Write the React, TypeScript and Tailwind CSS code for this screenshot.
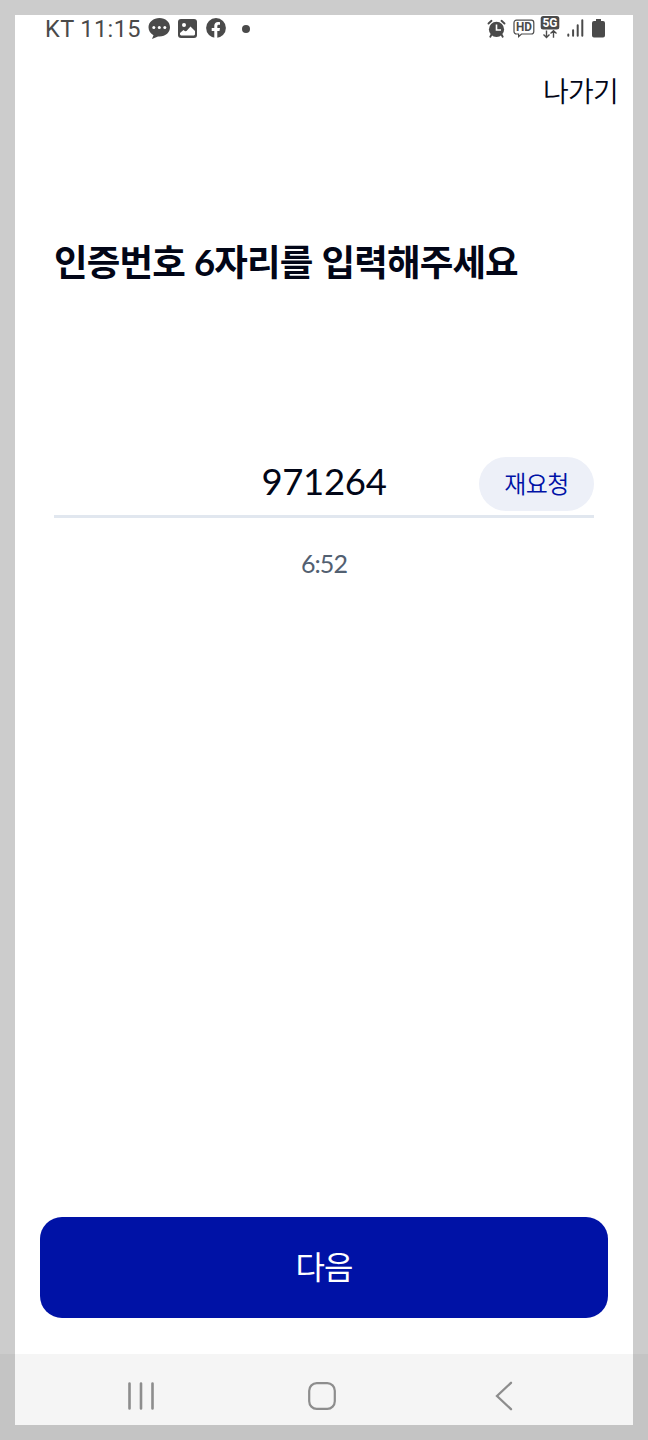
import React from "react";

const textFont = "font-['Lato','Noto_Sans_CJK_KR',sans-serif]";

function StatusIcons() {
  return (
    <div className="flex items-start text-[#4a4a4a]">
      {/* alarm */}
      <svg className="mt-[4px] h-[20px] w-[20px]" viewBox="0 0 20 20">
        <circle cx="9.5" cy="10.4" r="7.6" fill="currentColor" />
        <path
          d="M1.5 4.5L4.5 1.8M17.5 4.5L14.5 1.8M4.5 15.5L3.3 17.7M14.5 15.5l1.2 2.2"
          stroke="currentColor"
          strokeWidth="1.9"
          strokeLinecap="round"
        />
        <path d="M9.5 5.5V11H14" fill="none" stroke="#fff" strokeWidth="1.6" />
      </svg>
      {/* HD call */}
      <svg className="ml-[6px] mt-[4px] h-[19px] w-[22px]" viewBox="0 0 22 19">
        <path
          d="M3.5 1.2h14.8a2.5 2.5 0 0 1 2.5 2.5v8.8a2.5 2.5 0 0 1-2.5 2.5H8.5L5.6 17.6V15H3.5A2.5 2.5 0 0 1 1 12.5V3.7a2.5 2.5 0 0 1 2.5-2.5z"
          fill="none"
          stroke="currentColor"
          strokeWidth="1.2"
        />
        <text
          x="11"
          y="12.3"
          textAnchor="middle"
          textLength="16"
          lengthAdjust="spacingAndGlyphs"
          className="font-['Roboto',sans-serif] text-[12px] font-bold"
          fill="currentColor"
        >
          HD
        </text>
      </svg>
      {/* 5G */}
      <svg className="ml-[5px] h-[24px] w-[20px]" viewBox="0 0 20 24">
        <rect x="0.7" y="1" width="18.6" height="13.5" rx="2.5" fill="currentColor" />
        <text
          x="10"
          y="12.3"
          textAnchor="middle"
          textLength="15"
          lengthAdjust="spacingAndGlyphs"
          className="font-['Roboto',sans-serif] text-[13px] font-bold"
          fill="#fff"
        >
          5G
        </text>
        <path
          d="M6.500 15.500v7M3.500 19.600l3 2.900 3-2.900M13.500 22.800v-7M10.500 18.500l3-2.900 3 2.900"
          fill="none"
          stroke="currentColor"
          strokeWidth="1.4"
        />
      </svg>
      {/* signal */}
      <svg className="ml-[7px] mt-[4px] h-[18px] w-[17px]" viewBox="0 0 17 18">
        <path
          d="M1.3 15.5v1.3M6.1 11.2v5.6M10.7 6.2v10.6M15.3 1.2v15.6"
          stroke="currentColor"
          strokeWidth="2"
          strokeLinecap="round"
        />
      </svg>
      {/* battery */}
      <svg className="ml-[7px] mt-[4px] h-[19px] w-[15px]" viewBox="0 0 15 19">
        <path
          d="M5 0h5v2h2a2 2 0 0 1 2 2v12.5a2 2 0 0 1-2 2H3a2 2 0 0 1-2-2V4a2 2 0 0 1 2-2h2z"
          fill="currentColor"
        />
      </svg>
    </div>
  );
}

function StatusBar() {
  return (
    <div className="flex h-[30px] items-start justify-between pl-[30px] pr-[27px]">
      <div className="flex items-start text-[#4a4a4a]">
        <p className="w-[103px] whitespace-nowrap font-['Roboto',sans-serif] text-[23.5px] leading-[28px] tracking-[0.4px]">
          KT 11:15
        </p>
        <svg className="mt-[3px] h-[22px] w-[23px]" viewBox="0 0 23 22">
          <path
            d="M11.5 0C5.5 0 .5 4 .5 9.3c0 3.500 2 6.300 5 7.900L4 21l6-2.600c7.500.6 12-4 12-9.100C22 4 17.500 0 11.500 0z"
            fill="currentColor"
          />
          <circle cx="5.8" cy="9.5" r="1.5" fill="#fff" />
          <circle cx="11.3" cy="9.5" r="1.5" fill="#fff" />
          <circle cx="16.8" cy="9.5" r="1.5" fill="#fff" />
        </svg>
        <svg className="ml-[7px] mt-[4px] h-[19px] w-[19px]" viewBox="0 0 19 19">
          <rect width="19" height="19" rx="3" fill="currentColor" />
          <circle cx="6" cy="6" r="2" fill="#fff" />
          <path
            d="M2 15.5V14l3.5-3 1.6 1.2 1.4-.3 4-4.4L17 12v3.500l-1 1H3z"
            fill="#fff"
          />
        </svg>
        <svg className="ml-[9px] mt-[3px] h-[20px] w-[20px]" viewBox="0 0 20 20">
          <circle cx="10" cy="10" r="9.9" fill="currentColor" />
          <path
            d="M8.3 20v-7H5.7v-3h2.6V7.8C8.3 5.3 9.8 4 12 4c1 0 2 .2 2 .2v2.5h-1.2c-1.2 0-1.5.7-1.5 1.5V10H14l-.5 3h-2.2v7z"
            fill="#fff"
          />
        </svg>
        <div className="ml-[16px] mt-[10px] h-[8px] w-[8px] rounded-full bg-[#4a4a4a]" />
      </div>
      <StatusIcons />
    </div>
  );
}

function NavigationBar() {
  return (
    <div className="h-[86px] bg-[#c4c4c4] px-[15px] pb-[15px]">
      <div className="flex h-[71px] items-center bg-[#f5f5f5] pl-[111px] pt-[13px] text-[#8d8d8d]">
        <button>
          <svg className="h-[30px] w-[30px]" viewBox="0 0 30 30">
            <path
              d="M3.5 2.5v25M15 2.5v25M26.5 2.5v25"
              stroke="currentColor"
              strokeWidth="2.6"
              strokeLinecap="round"
            />
          </svg>
        </button>
        <button className="ml-[151px]">
          <svg className="h-[30px] w-[30px]" viewBox="0 0 30 30">
            <rect
              x="2.2"
              y="2.2"
              width="25.6"
              height="25.6"
              rx="7.5"
              fill="none"
              stroke="currentColor"
              strokeWidth="2.2"
            />
          </svg>
        </button>
        <button className="ml-[152px]">
          <svg className="h-[30px] w-[30px]" viewBox="0 0 30 30">
            <path
              d="M22 1.8L8 15l14 13.2"
              fill="none"
              stroke="currentColor"
              strokeWidth="2.3"
              strokeLinecap="round"
            />
          </svg>
        </button>
      </div>
    </div>
  );
}

function App() {
  return (
    <div className={`h-[1440px] w-[648px] overflow-hidden ${textFont}`}>
      <div className="h-[1354px] bg-[#cccccc] px-[15px] pt-[15px]">
        <div className="flex h-full flex-col bg-white text-[#020617]">
          <StatusBar />
          <div className="flex justify-end pr-[15px] pt-[26px]">
            <button className="text-[28px] font-[350] leading-[40px] tracking-[-0.8px]">
              나가기
            </button>
          </div>
          <h1 className="mt-[124px] whitespace-nowrap pl-[39px] text-[36.5px] font-bold leading-[54px] tracking-[-0.85px] [word-spacing:1px]">
            인증번호 6자리를 입력해주세요
          </h1>
          <div className="mx-[39px] mt-[168px] grid h-[61px] grid-cols-[115px_1fr_115px] border-b-[3px] border-[#e1e7ef]">
            <p className="col-start-2 pt-[2px] text-center text-[36.5px] leading-[44px] tracking-[-0.3px]">
              971264
            </p>
            <button className="h-[54px] rounded-full bg-[#edf0f8] text-[24px] font-[350] tracking-[-0.5px] text-[#0012a6]">
              재요청
            </button>
          </div>
          <p className="mt-[30px] text-center text-[25px] leading-[30px] tracking-[-0.9px] text-[#526071]">
            6:52
          </p>
          <button className="mx-[25px] mb-[36px] mt-auto h-[101px] rounded-[22px] bg-[#0012a6] pb-[2px] text-[32px] tracking-[-1px] text-white">
            다음
          </button>
        </div>
      </div>
      <NavigationBar />
    </div>
  );
}

export default App;
